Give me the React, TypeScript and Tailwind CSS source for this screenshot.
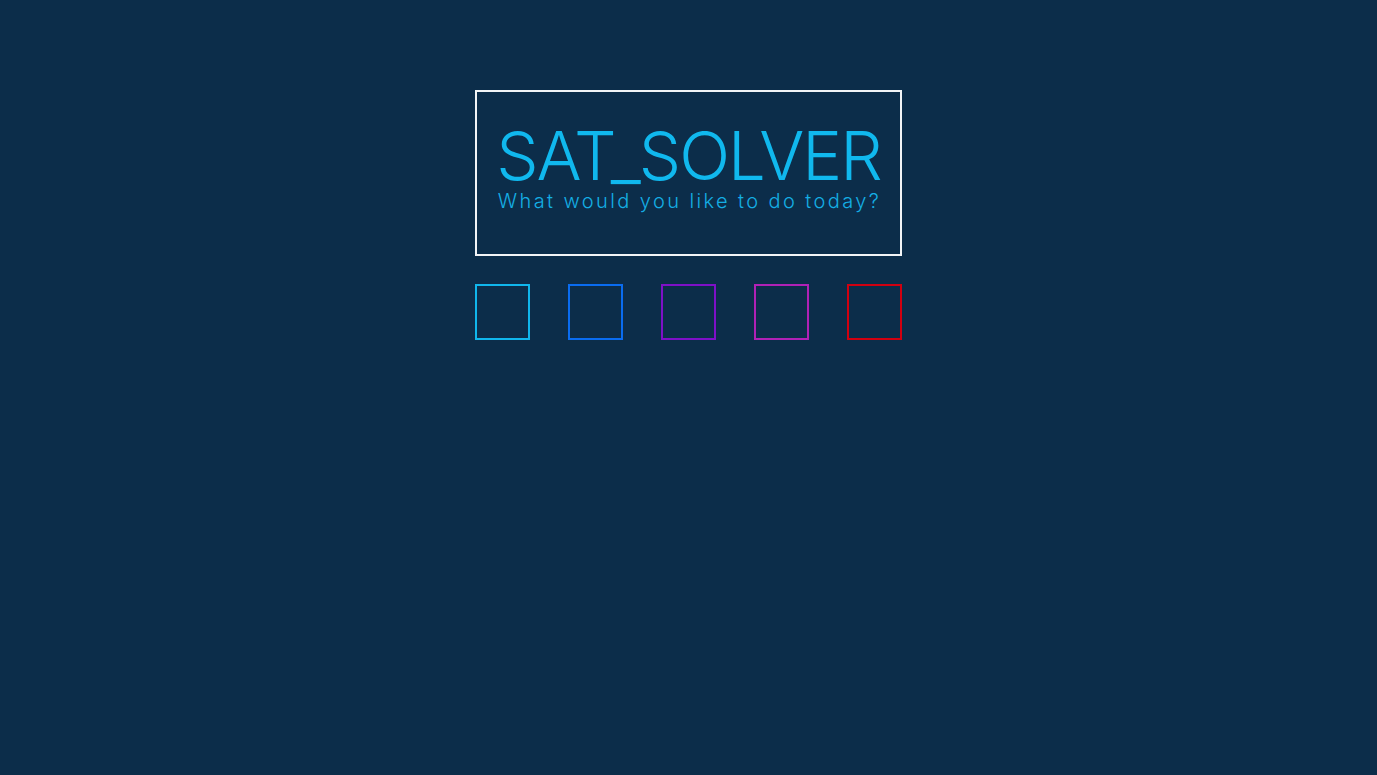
import React from "react";

export default function App() {
  const colors = ["border-[#10b6ec]", "border-[#0a6cf0]", "border-[#7f10c8]", "border-[#b021b6]", "border-[#d10010]"];
  return (
    <div className="min-h-[775px] w-full bg-[#0c2d4a] flex flex-col items-center pt-[90px]" style={{ fontFamily: "'Liberation Sans', Arial, sans-serif" }}>
      <div className="w-[427px] flex flex-col">
        <div className="h-[166px] border-2 border-[#f2f4f6] flex flex-col items-center pt-[30px]">
          <div className="text-[#10b8ee] text-[67px] leading-[68px] tracking-[-2px]" style={{ fontFamily: "Inter, 'Liberation Sans', sans-serif", fontWeight: 300 }}>SAT_SOLVER</div>
          <div className="text-[#14aee4] text-[20px] leading-[22px] tracking-[2.4px] pl-[2px]" style={{ fontFamily: "Inter, 'Liberation Sans', sans-serif", fontWeight: 300 }}>What would you like to do today?</div>
        </div>
        <div className="mt-[28px] flex justify-between">
          {colors.map((c, i) => (
            <div key={i} className={`w-[55px] h-[56px] border-2 ${c}`} />
          ))}
        </div>
      </div>
    </div>
  );
}
